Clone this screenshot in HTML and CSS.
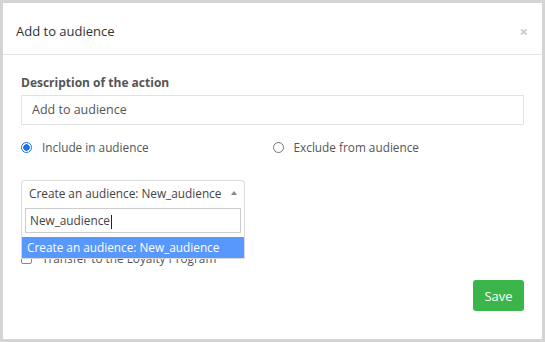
FILE: index.html
```html
<!DOCTYPE html>
<html lang="en">
<head>
  <meta charset="UTF-8">
  <title>Add to audience</title>
  <link rel="stylesheet" href="styles.css">
</head>
<body>

<div class="modal">
  <div class="modal-header">
    <h4 class="modal-title">Add to audience</h4>
    <span class="close">&times;</span>
  </div>

  <div class="modal-body">
    <label class="field-label">Description of the action</label>
    <div class="text-input">Add to audience</div>

    <div class="radio-row">
      <div class="radio-item">
        <span class="radio checked"></span>
        <span>Include in audience</span>
      </div>
      <div class="radio-item">
        <span class="radio"></span>
        <span>Exclude from audience</span>
      </div>
    </div>

    <div class="select-wrap">
      <div class="select">
        <span>Create an audience: New_audience</span>
        <span class="arrow"></span>
      </div>
      <!-- open dropdown lies over the checkbox row -->
      <div class="dropdown">
        <div class="search">New_audience<span class="caret"></span></div>
        <div class="option active">Create an audience: New_audience</div>
      </div>
    </div>

    <div class="check-row">
      <span class="checkbox"></span>
      <span>Transfer to the Loyalty Program</span>
    </div>

    <div class="footer">
      <button class="btn-save">Save</button>
    </div>
  </div>
</div>

</body>
</html>
```

FILE: styles.css
```css
/* General */
body {
  margin: 0;
  padding: 3px;
  background-color: #d4d4d4;
  font-family: 'Open Sans', sans-serif;
  color: #555;
}

/* Modal box */
.modal {
  width: 539px;
  height: 336px;
  background-color: white;
  box-sizing: border-box;
}

.modal-header {
  height: 52px;
  border-bottom: 1px solid #e5e5e5;
  display: flex;
  align-items: center;
  justify-content: space-between;
  padding: 5px 14px 0 13px;
  box-sizing: border-box;
}

.modal-title {
  margin: 0;
  font-size: 13px;
  font-weight: normal;
  color: #333;
}

.close {
  color: #c8c8c8;
  font-size: 15px;
  font-weight: bold;
  line-height: 1;
}

.modal-body {
  padding: 20px 18px 0 18px;
}

/* Description field */
.field-label {
  display: block;
  font-size: 12px;
  font-weight: bold;
  line-height: 16px;
  margin-bottom: 4px;
}

.text-input {
  height: 30px;
  border: 1px solid #e2e2e2;
  box-sizing: border-box;
  padding: 0 10px;
  font-size: 12.5px;
  line-height: 28px;
}

/* Radios */
.radio-row {
  display: flex;
  margin-top: 12px;
  height: 20px;
  align-items: center;
  font-size: 11.8px;
}

.radio-item {
  display: flex;
  align-items: center;
  width: 252px;
}

.radio {
  width: 9px;
  height: 9px;
  border: 1px solid #777;
  border-radius: 50%;
  margin-right: 10px;
}

.radio.checked {
  border-color: #1a73e8;
  background: radial-gradient(circle, #1a73e8 0 3px, white 3.5px);
}

/* Select with open dropdown */
.select-wrap {
  position: relative;
  width: 224px;
  margin-top: 23px;
}

.select {
  height: 24px;
  border: 1px solid #dcdcdc;
  border-bottom: none;
  border-radius: 4px 4px 0 0;
  box-sizing: border-box;
  display: flex;
  align-items: center;
  justify-content: space-between;
  padding: 0 7px 0 7px;
  font-size: 11.8px;
  color: #444;
}

.arrow {
  width: 0;
  height: 0;
  border-left: 3px solid transparent;
  border-right: 3px solid transparent;
  border-bottom: 4px solid #888;
}

.dropdown {
  position: absolute;
  top: 24px;
  left: 0;
  width: 224px;
  background-color: white;
  border: 1px solid #dcdcdc;
  border-top: none;
  box-sizing: border-box;
  z-index: 2;
}

.search {
  margin: 4px 3px 4px 3px;
  height: 25px;
  border: 1px solid #ccc;
  box-sizing: border-box;
  padding: 0 4px;
  font-size: 11.8px;
  line-height: 23px;
  color: #444;
}

.caret {
  display: inline-block;
  width: 1px;
  height: 14px;
  background-color: #222;
  vertical-align: middle;
  margin-left: 1px;
}

.option {
  height: 21px;
  line-height: 21px;
  padding: 0 5px;
  font-size: 11.8px;
}

.option.active {
  background-color: #5897fb;
  color: white;
}

/* Checkbox row (hidden behind dropdown) */
.check-row {
  display: flex;
  align-items: center;
  margin-top: 47px;
  height: 14px;
  font-size: 11.8px;
}

.checkbox {
  width: 9px;
  height: 9px;
  border: 1px solid #888;
  border-radius: 2px;
  margin-right: 10px;
}

/* Footer */
.footer {
  display: flex;
  justify-content: flex-end;
  margin-top: 15px;
}

.btn-save {
  width: 51px;
  height: 31px;
  background-color: #3ab54a;
  color: white;
  border: none;
  border-radius: 3px;
  font-family: 'Open Sans', sans-serif;
  font-size: 13px;
  cursor: pointer;
}
```
